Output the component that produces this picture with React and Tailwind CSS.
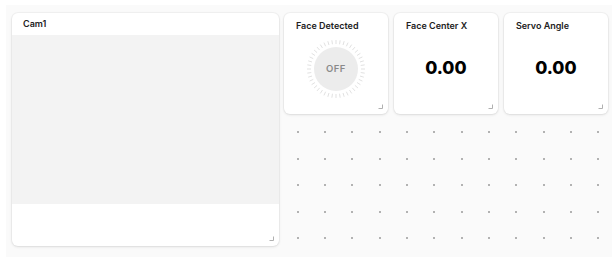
import React from "react";

const font = { fontFamily: "Inter, 'Noto Sans', sans-serif" };

function Resize() {
  return (
    <svg width="5" height="5" viewBox="0 0 5 5" className="absolute right-[5px] bottom-[5px]">
      <path d="M4.5 0.5 V4.5 H0.5" fill="none" stroke="#b0b0b0" strokeWidth="1" />
    </svg>
  );
}

function Ticks() {
  const ticks = [];
  const n = 44;
  for (let i = 0; i < n; i++) {
    const a = (i / n) * Math.PI * 2;
    const r1 = 25;
    const r2 = 29;
    ticks.push(
      <line
        key={i}
        x1={30 + Math.cos(a) * r1}
        y1={30 + Math.sin(a) * r1}
        x2={30 + Math.cos(a) * r2}
        y2={30 + Math.sin(a) * r2}
        stroke="#dedede"
        strokeWidth="0.9"
      />
    );
  }
  return (
    <svg width="60" height="60" viewBox="0 0 60 60" className="absolute inset-0">
      {ticks}
    </svg>
  );
}

function Card({ title, children, className = "" }) {
  return (
    <div className={"relative bg-white rounded-[6px] shadow-[0_0_0_1px_rgba(0,0,0,0.03),0_1px_3px_rgba(0,0,0,0.1)] " + className}>
      <div className="px-[12px] pt-[7px] text-[9px] font-semibold text-[#222] leading-[12px]">{title}</div>
      {children}
      <Resize />
    </div>
  );
}

export default function App() {
  const rows = [0, 1, 2, 3, 4];
  const cols = Array.from({ length: 12 }, (_, i) => i);
  return (
    <div className="w-[615px] h-[270px] bg-white pt-[5px] pl-[6px]" style={font}>
      <div className="w-[606px] h-[252px] bg-[#fafafa] flex pl-[6px] pt-[8px] gap-[5px]">
        <div className="relative w-[269px] h-[233px] bg-white rounded-[6px] shadow-[0_0_0_1px_rgba(0,0,0,0.03),0_1px_3px_rgba(0,0,0,0.1)] flex flex-col overflow-hidden">
          <div className="h-[22px] px-[11px] flex items-center text-[9px] font-semibold text-[#222]">Cam1</div>
          <div className="h-[169px] bg-[#f3f3f3]"></div>
          <div className="flex-1"></div>
          <Resize />
        </div>
        <div className="flex flex-col">
          <div className="flex gap-[6px]">
            <Card title="Face Detected" className="w-[104px] h-[101px]">
              <div className="flex justify-center mt-[7px]">
                <div className="relative w-[60px] h-[60px] flex items-center justify-center">
                  <Ticks />
                  <div className="w-[44px] h-[44px] rounded-full bg-[#ececec] flex items-center justify-center text-[9.5px] font-semibold text-[#8a8a8a] tracking-[0.5px]">
                    OFF
                  </div>
                </div>
              </div>
            </Card>
            <Card title="Face Center X" className="w-[104px] h-[101px]">
              <div className="flex justify-center mt-[26px] text-[17.5px] font-extrabold text-black leading-[20px]">0.00</div>
            </Card>
            <Card title="Servo Angle" className="w-[104px] h-[101px]">
              <div className="flex justify-center mt-[26px] text-[17.5px] font-extrabold text-black leading-[20px]">0.00</div>
            </Card>
          </div>
          <div className="mt-[5px] grid grid-cols-[repeat(12,27.35px)] grid-rows-[repeat(5,26.5px)]">
            {rows.map((r) =>
              cols.map((c) => (
                <div key={r + "-" + c} className="flex items-center justify-center">
                  <div className="w-[2px] h-[2px] rounded-full bg-[#9a9a9a]"></div>
                </div>
              ))
            )}
          </div>
        </div>
      </div>
    </div>
  );
}
